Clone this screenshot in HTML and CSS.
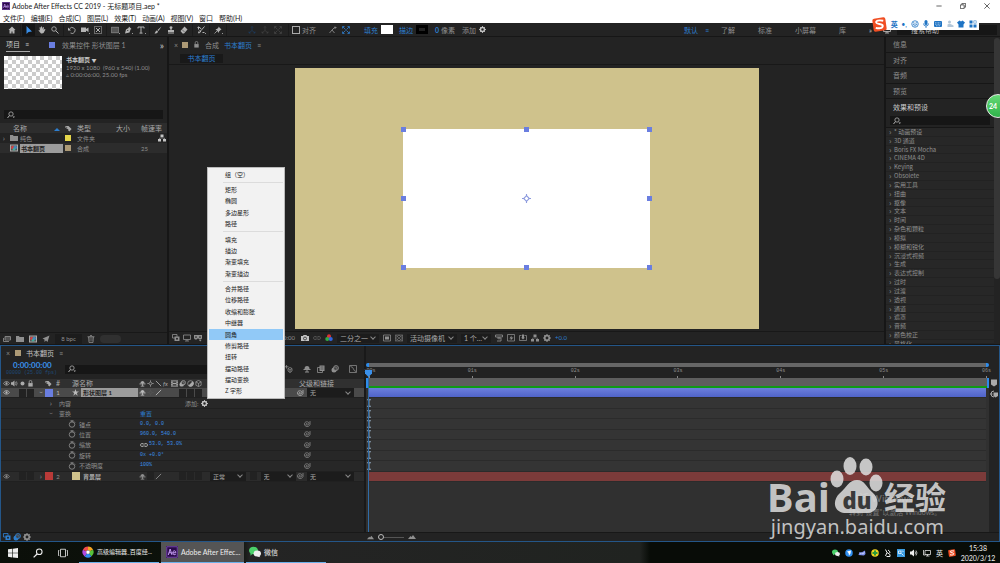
FILE: index.html
```
<!DOCTYPE html>
<html lang="zh-CN">
  <head>
    <meta charset="utf-8" />
    <title>Adobe After Effects CC 2019 - 无标题项目.aep *</title>
    <link rel="stylesheet" href="styles.css" />
  </head>
  <body>
    <!-- Icon set, 16 x 16 grid -->
    <svg class="sprite" aria-hidden="true">
      <symbol id="home" viewBox="0 0 16 16"><path fill="currentColor" d="M8 1 1 8h2v7h4v-4h2v4h4V8h2z" /></symbol>
      <symbol id="arrow" viewBox="0 0 16 16"><path fill="currentColor" d="M3 0v16l4-4 7-1z" /></symbol>
      <symbol id="hand" viewBox="0 0 16 16"><path fill="currentColor" d="M4 9 3 3l2-1 1 4V1h2l1 5 1-4 2 1-1 5 2-2 2 1-4 7-3 1H6L1 9l1-1z" /></symbol>
      <symbol id="zoom" viewBox="0 0 16 16"><circle cx="6" cy="6" r="4.5" fill="none" stroke="currentColor" stroke-width="1.7" /><path d="m9.500 9.500 5.500 5.500" stroke="currentColor" stroke-width="2" /></symbol>
      <symbol id="search" viewBox="0 0 16 16"><circle cx="8" cy="6" r="4.300" fill="none" stroke="currentColor" stroke-width="1.600" /><path d="m5 9-4 5" stroke="currentColor" stroke-width="2" /><path d="M11 11h5l-2.500 3z" fill="currentColor" /></symbol>
      <symbol id="rotate" viewBox="0 0 16 16"><path d="M3 6a6 6 0 1 1 2 8" fill="none" stroke="currentColor" stroke-width="1.700" /><path d="M0 3v6h6z" fill="currentColor" /></symbol>
      <symbol id="video" viewBox="0 0 16 16"><path fill="currentColor" d="M0 3h10v3l5-3v9l-5-3v3H0z" /></symbol>
      <symbol id="panbehind" viewBox="0 0 16 16"><path d="M1 1h14v14H1z" fill="none" stroke="currentColor" stroke-width="2" stroke-dasharray="2 2" /><path d="m4 4 8 8M12 4l-8 8" stroke="currentColor" stroke-width="2" /></symbol>
      <symbol id="rect" viewBox="0 0 16 16"><path fill="#555" stroke="currentColor" d="M.5 2.500h15v11H.5z" /></symbol>
      <symbol id="pen" viewBox="0 0 16 16"><path fill="currentColor" d="m10 1 5 5-2 1-2 6-9 2L4 7l5-3zM2 15l5-5" /><circle cx="7.500" cy="9" r="1.200" fill="#232323" /></symbol>
      <symbol id="type" viewBox="0 0 16 16"><path d="M2 5V2h12v3M8 2v12M5 14.200h6" fill="none" stroke="currentColor" stroke-width="2" /></symbol>
      <symbol id="brush" viewBox="0 0 16 16"><path fill="currentColor" d="m15 1-8 7 2 2zM6 9l2 2c-1 4-4 4-7 4 2-2 2-6 5-6z" /></symbol>
      <symbol id="stamp" viewBox="0 0 16 16"><path fill="currentColor" d="M5 2c1-2 5-2 6 0 0 3-2 3-2 6h5v4H2V8h5C7 5 5 5 5 2zM2 13h12v2H2z" /></symbol>
      <symbol id="eraser" viewBox="0 0 16 16"><path fill="currentColor" d="m9 1 6 6-7 8H5L1 10z" /><path d="m4 7 5 5" stroke="#232323" /></symbol>
      <symbol id="roto" viewBox="0 0 16 16"><path d="M15 1 8 9M8 9l-2 4-3 1 1-3 3-3M3 1v6M1 3h5l2 3M11 13h4" fill="none" stroke="currentColor" stroke-width="2" /></symbol>
      <symbol id="pin" viewBox="0 0 16 16"><path fill="currentColor" d="m9 1 6 6-2 1-3 3v3L3 6h3l3-3z" /><path d="m6 10-5 5" stroke="currentColor" stroke-width="1.500" /></symbol>
      <symbol id="axis" viewBox="0 0 16 16"><path d="M8 9V1M8 9l-6 5M8 9l6 5M6 3l2-2 2 2M2 11v3h3M14 11v3h-3" fill="none" stroke="currentColor" stroke-width="1.300" /></symbol>
      <symbol id="snap" viewBox="0 0 16 16"><path d="m1 14 5-6 5 6M6 8l5-5h4M12 1v5" fill="none" stroke="currentColor" stroke-width="1.700" /></symbol>
      <symbol id="expand" viewBox="0 0 16 16"><path d="M1 5V1h4M11 1h4v4M15 11v4h-4M5 15H1v-4M2 2l4 4M14 2l-4 4M2 14l4-4M14 14l-4-4M6 8h4" fill="none" stroke="currentColor" stroke-width="1.600" /></symbol>
      <symbol id="gear" viewBox="0 0 16 16"><circle cx="8" cy="8" r="4.600" fill="none" stroke="currentColor" stroke-width="3.400" /><path d="M8 0v3M8 13v3M0 8h3M13 8h3M2.500 2.500l2 2M11.500 11.500l2 2M13.500 2.500l-2 2M4.500 11.500l-2 2" stroke="currentColor" stroke-width="2" /></symbol>
      <symbol id="lock" viewBox="0 0 16 16"><path fill="currentColor" d="M3 7h10v8H3z" /><path d="M5 7V4a3 3 0 0 1 6 0v3" fill="none" stroke="currentColor" stroke-width="1.800" /></symbol>
      <symbol id="tag" viewBox="0 0 16 16"><path fill="currentColor" d="M1 2h7l7 7-5 6-3-3 1-2-7-4z" /><circle cx="4" cy="5" r="1.200" fill="#232323" /></symbol>
      <symbol id="folder" viewBox="0 0 16 16"><path fill="currentColor" d="M0 2h6l1 2h9v10H0z" /></symbol>
      <symbol id="folders" viewBox="0 0 16 16"><path fill="none" stroke="currentColor" stroke-width="1.700" d="M4 3h11v7H4zM1 6v7h11M4 6h11" /></symbol>
      <symbol id="comp" viewBox="0 0 16 16"><path fill="#aaa" d="M0 1h16v14H0z" /><path fill="#555" d="M2 3h12v10H2z" /><circle cx="5.500" cy="7" r="3.500" fill="#c44" /><circle cx="10.500" cy="7" r="3.500" fill="#48b" /><circle cx="8" cy="10.500" r="2.500" fill="#4a9" /></symbol>
      <symbol id="flow" viewBox="0 0 16 16"><path fill="currentColor" d="M5 1h6v5H5zM0 10h6v5H0zM10 10h6v5h-6z" /><path d="M8 5v3M3 10V8h10v2" fill="none" stroke="currentColor" /></symbol>
      <symbol id="plane" viewBox="0 0 16 16"><path fill="currentColor" d="M15 1 1 7l4 2v5l3-3 3 3z" /></symbol>
      <symbol id="trash" viewBox="0 0 16 16"><path d="M3 4h10l-1 11H4zM1 3.500h14M6 1h4M6 6v7M10 6v7" fill="none" stroke="currentColor" stroke-width="1.500" /></symbol>
      <symbol id="stack" viewBox="0 0 16 16"><path d="M1 1h9v7H1z" fill="none" stroke="currentColor" stroke-width="1.600" /><path fill="currentColor" d="M5 5h10v9H5z" /><circle cx="10" cy="9.500" r="2" fill="#232323" /></symbol>
      <symbol id="frameblend" viewBox="0 0 16 16"><path d="M1 5h10v10H1z" fill="none" stroke="currentColor" stroke-width="1.600" /><path fill="currentColor" d="M5 1h10v11H5z" /><path d="M7 4h6M7 8h6" stroke="#444" stroke-width="1.500" /></symbol>
      <symbol id="monitor" viewBox="0 0 16 16"><path d="M1 2h14v9H1zM8 11v3M4 14h8" fill="none" stroke="currentColor" stroke-width="1.600" /></symbol>
      <symbol id="mask" viewBox="0 0 16 16"><path fill="currentColor" d="M0 2h16v6c-1 4-6 4-8 0-2 4-7 4-8 0zM10 12h5l-2.500 3z" /><circle cx="4" cy="6" r="1.700" fill="#232323" /><circle cx="12" cy="6" r="1.700" fill="#232323" /></symbol>
      <symbol id="camera" viewBox="0 0 16 16"><path fill="currentColor" d="M0 4h4l1-2h6l1 2h4v10H0z" /><circle cx="8" cy="9" r="3" fill="none" stroke="#232323" stroke-width="1.500" /></symbol>
      <symbol id="rgb" viewBox="0 0 16 16"><circle cx="8" cy="4.500" r="4" fill="#d33" /><circle cx="4.500" cy="10" r="4" fill="#3a4" /><circle cx="11.500" cy="10" r="4" fill="#36d" /></symbol>
      <symbol id="region" viewBox="0 0 16 16"><path d="M1 2h14v12H1z" fill="none" stroke="currentColor" stroke-width="1.500" /><path fill="currentColor" d="M4 5h8v6H4z" /></symbol>
      <symbol id="grid" viewBox="0 0 16 16"><path d="M1 2h14v12H1zM1 2l14 12M15 2 1 14M8 2 1 8l7 6 7-6z" fill="none" stroke="currentColor" /></symbol>
      <symbol id="aspect" viewBox="0 0 16 16"><path d="M1 2h14v4H1zM4 8h8v6H4M8 6v5" fill="none" stroke="currentColor" stroke-width="1.700" /></symbol>
      <symbol id="fast" viewBox="0 0 16 16"><path d="M1 1h14v13H1z" fill="none" stroke="currentColor" stroke-width="1.500" /><path fill="currentColor" d="M9 3 5 9h3l-1 4 6-6H9z" /></symbol>
      <symbol id="graphframe" viewBox="0 0 16 16"><path d="M5 3H1v10h14V3h-4" fill="none" stroke="currentColor" stroke-width="1.500" /><path fill="currentColor" d="M6 1h4v6h2l-4 4-4-4h2z" /></symbol>
      <symbol id="eye" viewBox="0 0 16 16"><path d="M1 8c4-6 10-6 14 0-4 5-10 5-14 0z" fill="none" stroke="currentColor" stroke-width="1.800" /><circle cx="8" cy="8" r="2.600" fill="currentColor" /></symbol>
      <symbol id="speaker" viewBox="0 0 16 16"><path fill="currentColor" d="M0 5h3l5-4v14l-5-4H0z" /><path d="M10 5q2 3 0 6M12 3q4 5 0 10" fill="none" stroke="currentColor" stroke-width="1.500" /></symbol>
      <symbol id="dot" viewBox="0 0 16 16"><circle cx="8" cy="8" r="4.500" fill="currentColor" /></symbol>
      <symbol id="shy" viewBox="0 0 16 16"><path fill="currentColor" d="M3 8a5 6 0 0 1 10 0z" /><path d="M8 7v7M1 9h14M4 14h8" fill="none" stroke="currentColor" stroke-width="2" /></symbol>
      <symbol id="sun" viewBox="0 0 16 16"><circle cx="8" cy="8" r="3" fill="none" stroke="currentColor" stroke-width="1.500" /><path d="M8 1v3M8 12v3M1 8h3M12 8h3" stroke="currentColor" stroke-width="2" /></symbol>
      <symbol id="slash" viewBox="0 0 16 16"><path d="M2 14 14 2" stroke="currentColor" stroke-width="2" /></symbol>
      <symbol id="backslash" viewBox="0 0 16 16"><path d="m2 2 12 12" stroke="currentColor" stroke-width="2" /></symbol>
      <symbol id="film" viewBox="0 0 16 16"><path fill="currentColor" d="M0 1h16v14H0z" /><path fill="#444" d="M4 3h8v4H4zM4 9h8v4H4zM1 3h2v2H1zM1 7h2v2H1zM1 11h2v2H1zM13 3h2v2h-2zM13 7h2v2h-2zM13 11h2v2h-2z" /></symbol>
      <symbol id="blur" viewBox="0 0 16 16"><ellipse cx="6" cy="10" rx="5" ry="5" fill="currentColor" /><circle cx="10" cy="6" r="5" fill="#444" stroke="currentColor" stroke-width="1.500" /><circle cx="8" cy="8" r="4" fill="none" stroke="currentColor" /></symbol>
      <symbol id="half" viewBox="0 0 16 16"><circle cx="8" cy="8" r="6.500" fill="none" stroke="currentColor" stroke-width="1.500" /><path fill="currentColor" d="M13 3A7 7 0 0 1 3 13z" /></symbol>
      <symbol id="cube" viewBox="0 0 16 16"><path d="m8 1 6 3v8l-6 3-6-3V4zM2 4l6 4 6-4M8 8v7" fill="none" stroke="currentColor" stroke-width="1.500" /></symbol>
      <symbol id="star" viewBox="0 0 16 16"><path fill="currentColor" d="m8 0 2 5.500h6l-5 3.500 2 6.500-5-4-5 4 2-6.500L0 5.500h6z" /></symbol>
      <symbol id="watch" viewBox="0 0 16 16"><circle cx="8" cy="9" r="5.500" fill="none" stroke="currentColor" stroke-width="1.700" /><path d="M5 1.500h6M8 2v3M12 3l2 2" stroke="currentColor" stroke-width="1.700" /></symbol>
      <symbol id="spiral" viewBox="0 0 16 16"><path d="M9 8a1.500 1.500 0 1 0-1 2c3 0 4-2 4-4-2-4-9-3-9 2 0 6 9 7 11 1V2" fill="none" stroke="currentColor" stroke-width="1.500" /></symbol>
      <symbol id="chain" viewBox="0 0 16 16"><path d="M7 5H4a3 3 0 0 0 0 6h3M9 5h3a3 3 0 0 1 0 6H9M5 8h6" fill="none" stroke="currentColor" stroke-width="1.800" /></symbol>
      <symbol id="curve" viewBox="0 0 16 16"><path d="M1 1h14v14H1zM3 3q5 1 6 5t5 5" fill="none" stroke="currentColor" stroke-width="1.500" /></symbol>
      <symbol id="cubestar" viewBox="0 0 16 16"><path d="m10 5 4 2v5l-4 3-4-3V7zM6 7l4 3 4-3M10 10v5M3 0v7M0 3.500h7" fill="none" stroke="currentColor" stroke-width="1.500" /></symbol>
      <symbol id="key" viewBox="0 0 16 16"><path d="M4 1.500h8M4 14.500h8M8 1v14" stroke="currentColor" stroke-width="2" /></symbol>
      <symbol id="mountain" viewBox="0 0 16 16"><path fill="currentColor" d="m0 12 5-6 2 2 3-4 6 8z" /></symbol>
      <symbol id="marker" viewBox="0 0 16 16"><path fill="currentColor" d="M2 1h12v10l-6 4-6-4z" /></symbol>
      <symbol id="bin" viewBox="0 0 16 16"><path d="M8 2a6 6 0 1 0 0 12M0 8h5" fill="none" stroke="currentColor" stroke-width="2" /><path fill="currentColor" d="M7 5h9v7l-5 3-4-3z" /></symbol>
      <symbol id="sogou" viewBox="0 0 16 16"><rect x="1" y="1" width="14" height="14" rx="2" fill="#f04e23" transform="rotate(-8 8 8)" /><path d="M12 4C7 3 4 4 4.500 6s7 1 7 3.500S7 12.500 4 11.500" fill="none" stroke="#fff" stroke-width="2" /></symbol>
      <symbol id="smile" viewBox="0 0 16 16"><circle cx="8" cy="8" r="6.500" fill="none" stroke="currentColor" stroke-width="1.600" /><path d="M4.500 8c1 5 6 5 7 0zM5.500 4v2M10.500 4v2" fill="none" stroke="currentColor" stroke-width="1.500" /></symbol>
      <symbol id="mic" viewBox="0 0 16 16"><rect x="5" y="0" width="6" height="10" rx="3" fill="currentColor" /><path d="M3 7q0 5 5 5t5-5M8 12v4" fill="none" stroke="currentColor" stroke-width="1.600" /></symbol>
      <symbol id="keyboard" viewBox="0 0 16 16"><rect y="2" width="16" height="12" rx="2" fill="currentColor" /><path d="M2 5.500h12M2 8.500h12M4 11.500h8" stroke="#fff" stroke-dasharray="2 1" /></symbol>
      <symbol id="person" viewBox="0 0 16 16"><circle cx="7" cy="4" r="3" fill="currentColor" /><path d="M3 15V9q4-3 8 0l4 2v3H3z" fill="currentColor" /></symbol>
      <symbol id="shirt" viewBox="0 0 16 16"><path fill="currentColor" d="m5 1 3 2 3-2 5 4-3 4v6H3V9L0 5z" /></symbol>
      <symbol id="tiles" viewBox="0 0 16 16"><path fill="currentColor" d="M1 1h6v6H1zM1 9h6v6H1zM9 9h6v6H9z" /><path d="M9.500 1.500h5v5h-5z" fill="none" stroke="currentColor" /></symbol>
      <symbol id="ae" viewBox="0 0 16 16"><rect width="16" height="16" rx="1" fill="#2a0a4a" /><path d="M1 1h14v14H1z" fill="none" stroke="#8d5cc4" /><path d="m3 12 2.500-8L8 12M4 9h3M9 9h4c0-4-4-3-4 0s3 3 4 2" fill="none" stroke="#c9a0f5" stroke-width="1.300" /></symbol>
      <symbol id="windows" viewBox="0 0 16 16"><path fill="currentColor" d="m0 2 7-1v6.500H0zM8 1l8-1v7.500H8zM0 8.500h7V15l-7-1zM8 8.500h8V16l-8-1z" /></symbol>
      <symbol id="taskview" viewBox="0 0 16 16"><path d="M4 2h8v12H4zM2 4H.7v8H2M14 4h1.300v8H14" fill="none" stroke="currentColor" stroke-width="1.300" /></symbol>
      <symbol id="wheel" viewBox="0 0 16 16"><g fill="none" stroke-width="5"><path d="M8 3a5 5 0 0 1 4.500 3" stroke="#f5a623" /><path d="M12.500 6A5 5 0 0 1 11 12" stroke="#58c13a" /><path d="M11 12a5 5 0 0 1-6 0" stroke="#2f8cf0" /><path d="M5 12a5 5 0 0 1-1.500-6" stroke="#b04ae0" /><path d="M3.500 6A5 5 0 0 1 8 3" stroke="#f04b4b" /></g><circle cx="8" cy="8" r="2.500" fill="#fff" /></symbol>
      <symbol id="wechat" viewBox="0 0 16 16"><ellipse cx="6" cy="6" rx="6" ry="5" fill="#4bd06a" /><path fill="#4bd06a" d="M2 9v4l3-3z" /><ellipse cx="11" cy="10" rx="5" ry="4" fill="#eee" /><path fill="#eee" d="m13 12 2 3-4-1z" /></symbol>
      <symbol id="bluebird" viewBox="0 0 16 16"><circle cx="8" cy="8" r="7.500" fill="#2f8ff0" /><path fill="#fff" d="m4 5 8-2-1 6-3 4-1-5z" /></symbol>
      <symbol id="cloud" viewBox="0 0 16 16"><path fill="#7f92ee" d="M1 12 3 6l4 1 7-4 1 7-3 3z" /><path d="m4 10 3-2 3 2 3-4" stroke="#fff" fill="none" /></symbol>
      <symbol id="plus" viewBox="0 0 16 16"><circle cx="8" cy="8" r="7.500" fill="#f0d322" /><path d="M8 3v10M3 8h10" stroke="#2a9a3c" stroke-width="4" /></symbol>
      <symbol id="satellite" viewBox="0 0 16 16"><path d="m3 1 3 6-3 7M6 7l6 4v4H5M8 2q4 2 4 6" fill="none" stroke="currentColor" stroke-width="2" /></symbol>
      <symbol id="bluebox" viewBox="0 0 16 16"><path fill="#3a9be0" d="M0 0h16v16H0z" /><path d="M3 4h5v5H3zM9 9l4 4M10 3l3 3" stroke="#fff" stroke-width="1.500" fill="none" /></symbol>
      <symbol id="network" viewBox="0 0 16 16"><path d="M4 3h11v8H4zM9 11v3M6 14h7M1 2v10h4" fill="none" stroke="currentColor" stroke-width="1.500" /></symbol>
    </svg>

    <header class="titlebar">
      <svg class="icon icon-app"><use href="#ae" /></svg>
      <span class="title">Adobe After Effects CC 2019 - 无标题项目.aep *</span>
      <div class="window-buttons">
        <button aria-label="最小化"><svg viewBox="0 0 16 16"><path d="M1 8h14" /></svg></button>
        <button aria-label="还原"><svg viewBox="0 0 16 16"><path d="M1 5h10v10H1zM5 5V1h10v10h-4" /></svg></button>
        <button aria-label="关闭"><svg viewBox="0 0 16 16"><path d="m1 1 14 14M15 1 1 15" /></svg></button>
      </div>
    </header>

    <nav class="menubar">
      <button>文件(F)</button>
      <button>编辑(E)</button>
      <button>合成(C)</button>
      <button>图层(L)</button>
      <button>效果(T)</button>
      <button>动画(A)</button>
      <button>视图(V)</button>
      <button>窗口</button>
      <button>帮助(H)</button>
    </nav>

    <div class="toolbar">
      <div class="tools">
        <button aria-label="主页"><svg class="icon"><use href="#home" /></svg></button>
      </div>
      <div class="tools">
        <button class="on" aria-label="选取"><svg class="icon"><use href="#arrow" /></svg></button>
        <button aria-label="手形"><svg class="icon"><use href="#hand" /></svg></button>
        <button aria-label="缩放"><svg class="icon"><use href="#zoom" /></svg></button>
      </div>
      <div class="tools">
        <button aria-label="旋转"><svg class="icon"><use href="#rotate" /></svg></button>
        <button aria-label="摄像机" class="more"><svg class="icon"><use href="#video" /></svg></button>
        <button aria-label="锚点"><svg class="icon"><use href="#panbehind" /></svg></button>
      </div>
      <div class="tools">
        <button aria-label="矩形" class="more"><svg class="icon"><use href="#rect" /></svg></button>
        <button aria-label="钢笔" class="more"><svg class="icon"><use href="#pen" /></svg></button>
        <button aria-label="文字" class="more"><svg class="icon"><use href="#type" /></svg></button>
      </div>
      <div class="tools">
        <button aria-label="画笔"><svg class="icon"><use href="#brush" /></svg></button>
        <button aria-label="仿制图章"><svg class="icon"><use href="#stamp" /></svg></button>
        <button aria-label="橡皮擦"><svg class="icon"><use href="#eraser" /></svg></button>
      </div>
      <div class="tools">
        <button aria-label="Roto 笔刷" class="more"><svg class="icon"><use href="#roto" /></svg></button>
      </div>
      <div class="tools">
        <button aria-label="人偶" class="more"><svg class="icon"><use href="#pin" /></svg></button>
      </div>
      <div class="tools axes">
        <button class="blue" aria-label="本地轴"><svg class="icon"><use href="#axis" /></svg></button>
        <button aria-label="世界轴"><svg class="icon"><use href="#axis" /></svg></button>
        <button aria-label="视图轴"><svg class="icon"><use href="#expand" /></svg></button>
      </div>
      <div class="snapping">
        <label><input type="checkbox" />对齐</label>
        <svg class="icon"><use href="#snap" /></svg>
        <svg class="icon blue"><use href="#expand" /></svg>
      </div>
      <div class="shape-options">
        <button class="blue">填充</button>
        <button class="swatch white" aria-label="填充颜色"></button>
        <button class="blue stroke">描边</button>
        <button class="swatch black" aria-label="描边颜色"></button>
        <span class="px"><b class="blue">0</b>像素</span>
        <span>添加</span>
        <button aria-label="添加"><svg class="icon icon-s bright"><use href="#gear" /></svg></button>
      </div>
      <div class="workspaces">
        <button class="blue">默认<span class="burger">≡</span></button>
        <button>了解</button>
        <button>标准</button>
        <button>小屏幕</button>
        <button>库</button>
        <button class="bright">»</button>
      </div>
      <div class="help-search">
        <svg class="icon bright"><use href="#monitor" /></svg>
        <input type="search" placeholder="搜索帮助" aria-label="搜索帮助" />
      </div>
    </div>

    <main class="workspace">
      <section class="panel project">
        <div class="tabs">
          <button class="tab active">项目 <span>≡</span></button>
          <button class="tab second"><i class="chip violet"></i>效果控件 形状图层 1</button>
          <button class="bright overflow">»</button>
        </div>
        <div class="preview">
          <div class="thumb"></div>
          <div class="info">
            <strong>书本翻页 <small>▼</small></strong>
            <p>1920 x 1080 &nbsp;(960 x 540) (1.00)</p>
            <p>▵ 0:00:06:00, 25.00 fps</p>
          </div>
        </div>
        <label class="searchbox"><svg class="icon"><use href="#search" /></svg><input type="text" aria-label="搜索项目" /></label>
        <table class="items">
          <thead>
            <tr><th class="c-name">名称<i class="sort"></i></th><th class="c-tag"><svg class="icon icon-s"><use href="#tag" /></svg></th><th class="c-type">类型</th><th class="c-size">大小</th><th>帧速率</th></tr>
          </thead>
          <tbody>
            <tr><td><span class="file"><i class="twirl">›</i><svg class="icon"><use href="#folder" /></svg>纯色</span></td><td><i class="chip yellow"></i></td><td>文件夹</td><td></td><td class="end"><svg class="icon bright"><use href="#flow" /></svg></td></tr>
            <tr class="selected"><td><span class="file"><i class="twirl"></i><svg class="icon"><use href="#comp" /></svg><b>书本翻页</b></span></td><td><i class="chip tan"></i></td><td>合成</td><td></td><td>25</td></tr>
          </tbody>
        </table>
        <div class="panel-footer">
          <svg class="icon"><use href="#folders" /></svg>
          <svg class="icon"><use href="#folder" /></svg>
          <svg class="icon"><use href="#comp" /></svg>
          <svg class="icon"><use href="#plane" /></svg>
          <button class="bpc">8 bpc</button>
          <svg class="icon"><use href="#trash" /></svg>
          <span class="pill"></span>
        </div>
      </section>

      <section class="panel viewer">
        <div class="tabs">
          <span class="close">×</span><i class="chip tan"></i><svg class="icon icon-s"><use href="#lock" /></svg>
          <span>合成</span><span class="blue">书本翻页</span><span>≡</span>
        </div>
        <div class="crumbs"><button class="blue">书本翻页</button></div>
        <div class="stage">
          <div class="frame">
            <div class="shape">
              <i></i><i></i><i></i>
              <i></i>
              <svg class="anchor" viewBox="0 0 16 16"><path d="m8 3 5 5-5 5-5-5z" /><path d="M8 0v4M8 12v4M0 8h4M12 8h4" /></svg>
              <i></i>
              <i></i><i></i><i></i>
            </div>
          </div>
        </div>
        <div class="viewer-footer">
          <div class="left">
            <svg class="icon"><use href="#stack" /></svg>
            <svg class="icon"><use href="#monitor" /></svg>
            <svg class="icon"><use href="#mask" /></svg>
          </div>
          <button class="time">0:00:00:00</button>
          <svg class="icon bright"><use href="#camera" /></svg>
          <svg class="icon faint"><use href="#chain" /></svg>
          <svg class="icon"><use href="#rgb" /></svg>
          <span class="drop res"><select aria-label="分辨率"><option>二分之一</option></select></span>
          <svg class="icon"><use href="#region" /></svg>
          <svg class="icon"><use href="#grid" /></svg>
          <span class="drop cam"><select aria-label="3D 视图"><option>活动摄像机</option></select></span>
          <span class="drop views"><select aria-label="视图布局"><option>1 个…</option></select></span>
          <svg class="icon"><use href="#aspect" /></svg>
          <svg class="icon"><use href="#fast" /></svg>
          <svg class="icon"><use href="#graphframe" /></svg>
          <svg class="icon"><use href="#flow" /></svg>
          <svg class="icon"><use href="#gear" /></svg>
          <button class="blue exposure">+0.0</button>
        </div>
      </section>

      <aside class="panel effects">
        <div class="stackhead">
          <button>信息</button>
          <button>对齐</button>
          <button>音频</button>
          <button>预览</button>
          <button class="open">效果和预设<span>≡</span></button>
        </div>
        <label class="searchbox"><svg class="icon"><use href="#search" /></svg><input type="text" aria-label="搜索效果" /></label>
        <ul class="effect-list">
          <li>* 动画预设</li>
          <li>3D 通道</li>
          <li>Boris FX Mocha</li>
          <li>CINEMA 4D</li>
          <li>Keying</li>
          <li>Obsolete</li>
          <li>实用工具</li>
          <li>扭曲</li>
          <li>抠像</li>
          <li>文本</li>
          <li>时间</li>
          <li>杂色和颗粒</li>
          <li>模拟</li>
          <li>模糊和锐化</li>
          <li>沉浸式视频</li>
          <li>生成</li>
          <li>表达式控制</li>
          <li>过时</li>
          <li>过渡</li>
          <li>透视</li>
          <li>通道</li>
          <li>遮罩</li>
          <li>音频</li>
          <li>颜色校正</li>
          <li>风格化</li>
        </ul>
        <span class="scrollbar"></span>
      </aside>
    </main>

    <section class="timeline">
      <div class="layers">
        <div class="tabs"><span class="close">×</span><i class="chip tan"></i><span class="bright">书本翻页</span><span>≡</span></div>
        <div class="time-row">
          <div class="timecode"><b>0:00:00:00</b><span>00000 (25.00 fps)</span></div>
          <label class="searchbox"><svg class="icon"><use href="#search" /></svg><input type="text" aria-label="搜索图层" /></label>
          <div class="comp-switches">
            <svg class="icon"><use href="#cubestar" /></svg>
            <svg class="icon"><use href="#shy" /></svg>
            <svg class="icon"><use href="#frameblend" /></svg>
            <svg class="icon"><use href="#blur" /></svg>
            <svg class="icon"><use href="#curve" /></svg>
          </div>
        </div>
        <div class="layer head">
          <span class="av"><svg class="icon"><use href="#eye" /></svg><svg class="icon"><use href="#speaker" /></svg><svg class="icon"><use href="#dot" /></svg><svg class="icon"><use href="#lock" /></svg></span>
          <span></span>
          <svg class="icon icon-s"><use href="#tag" /></svg>
          <span class="num">#</span>
          <span class="source">源名称</span>
          <span></span>
          <span class="switches"><svg class="icon"><use href="#shy" /></svg><svg class="icon"><use href="#sun" /></svg><svg class="icon"><use href="#backslash" /></svg><em>fx</em><svg class="icon"><use href="#film" /></svg><svg class="icon"><use href="#blur" /></svg><svg class="icon"><use href="#half" /></svg><svg class="icon"><use href="#cube" /></svg></span>
          <span></span>
          <span class="parent-head">父级和链接</span>
        </div>
        <div class="rows">
          <div class="layer selected">
            <span class="av"><svg class="icon"><use href="#eye" /></svg><i class="none"></i><i></i><i></i></span>
            <button class="twirl open" aria-label="折叠">›</button>
            <i class="label violet"></i>
            <span class="num">1</span>
            <svg class="icon icon-s"><use href="#star" /></svg>
            <b class="name">形状图层 1</b>
            <span class="switches"><svg class="icon"><use href="#shy" /></svg><svg class="icon faint"><use href="#sun" /></svg><svg class="icon"><use href="#slash" /></svg><i class="none"></i><i class="none"></i><i></i><i></i><i></i></span>
            <span class="modes"></span>
            <span class="parent"><svg class="icon"><use href="#spiral" /></svg><span class="drop"><select aria-label="父级"><option>无</option></select></span></span>
          </div>
          <div class="group"><button class="twirl" aria-label="展开">›</button><span>内容</span><span></span><span class="add">添加: <svg class="icon icon-s bright"><use href="#gear" /></svg></span></div>
          <div class="group"><button class="twirl open" aria-label="折叠">›</button><span>变换</span><button class="blue">重置</button></div>
          <div class="prop"><svg class="icon"><use href="#watch" /></svg><span>锚点</span><span class="value">0.0, 0.0</span><svg class="icon"><use href="#spiral" /></svg></div>
          <div class="prop"><svg class="icon"><use href="#watch" /></svg><span>位置</span><span class="value">960.0, 540.0</span><svg class="icon"><use href="#spiral" /></svg></div>
          <div class="prop"><svg class="icon"><use href="#watch" /></svg><span>缩放</span><span class="value"><svg class="icon"><use href="#chain" /></svg> 53.0, 53.0%</span><svg class="icon"><use href="#spiral" /></svg></div>
          <div class="prop"><svg class="icon"><use href="#watch" /></svg><span>旋转</span><span class="value">0x +0.0°</span><svg class="icon"><use href="#spiral" /></svg></div>
          <div class="prop"><svg class="icon"><use href="#watch" /></svg><span>不透明度</span><span class="value">100%</span><svg class="icon"><use href="#spiral" /></svg></div>
          <div class="layer">
            <span class="av"><svg class="icon"><use href="#eye" /></svg><i class="none"></i><i></i><i></i></span>
            <button class="twirl" aria-label="展开">›</button>
            <i class="label red"></i>
            <span class="num">2</span>
            <i class="label sand"></i>
            <b class="name">背景层</b>
            <span class="switches"><svg class="icon"><use href="#shy" /></svg><i></i><svg class="icon"><use href="#slash" /></svg><i class="none"></i><i class="none"></i><i></i><i></i><i></i></span>
            <span class="modes"><span class="drop"><select aria-label="模式"><option>正常</option></select></span><i></i><span class="drop"><select aria-label="轨道遮罩"><option>无</option></select></span></span>
            <span class="parent"><svg class="icon"><use href="#spiral" /></svg><span class="drop"><select aria-label="父级"><option>无</option></select></span></span>
          </div>
        </div>
      </div>

      <div class="track">
        <div class="time-nav"></div>
        <div class="ruler">
          <span>:00s</span><span>01s</span><span>02s</span><span>03s</span><span>04s</span><span>05s</span><span>06s</span>
        </div>
        <div class="workarea"></div>
        <div class="lanes">
          <div class="bar violet"></div>
          <div><svg class="icon"><use href="#key" /></svg></div>
          <div><svg class="icon"><use href="#key" /></svg></div>
          <div><svg class="icon"><use href="#key" /></svg></div>
          <div><svg class="icon"><use href="#key" /></svg></div>
          <div><svg class="icon"><use href="#key" /></svg></div>
          <div><svg class="icon"><use href="#key" /></svg></div>
          <div><svg class="icon"><use href="#key" /></svg></div>
          <div class="bar red"></div>
        </div>
        <div class="playhead"></div>
      </div>
      <div class="side">
        <svg class="icon"><use href="#marker" /></svg>
        <svg class="icon"><use href="#bin" /></svg>
      </div>

      <div class="timeline-footer">
        <div class="toggles"><svg class="icon blue"><use href="#stack" /></svg><svg class="icon blue"><use href="#blur" /></svg><svg class="icon"><use href="#gear" /></svg></div>
        <svg class="icon icon-s"><use href="#mountain" /></svg>
        <input type="range" min="0" max="100" value="0" aria-label="缩放时间轴" />
        <svg class="icon"><use href="#mountain" /></svg>
      </div>
    </section>

    <footer class="taskbar">
      <button class="sys" aria-label="开始"><svg class="icon icon-l"><use href="#windows" /></svg></button>
      <button class="sys" aria-label="搜索"><svg class="icon icon-l flip"><use href="#zoom" /></svg></button>
      <button class="sys" aria-label="任务视图"><svg class="icon icon-l"><use href="#taskview" /></svg></button>
      <button class="app browser"><svg class="icon icon-xl"><use href="#wheel" /></svg>高级编辑器_百度经...</button>
      <button class="app current"><svg class="icon icon-xl"><use href="#ae" /></svg>Adobe After Effec...</button>
      <button class="app"><svg class="icon icon-xl"><use href="#wechat" /></svg>微信</button>
      <div class="tray">
        <svg class="icon"><use href="#wechat" /></svg>
        <svg class="icon"><use href="#bluebird" /></svg>
        <svg class="icon"><use href="#cloud" /></svg>
        <svg class="icon"><use href="#plus" /></svg>
        <svg class="icon"><use href="#satellite" /></svg>
        <svg class="icon"><use href="#bluebox" /></svg>
        <svg class="icon"><use href="#speaker" /></svg>
        <svg class="icon"><use href="#network" /></svg>
        <span>英</span>
        <svg class="icon"><use href="#sogou" /></svg>
      </div>
      <div class="clock"><span>15:38</span><span>2020/3/12</span></div>
    </footer>

    <!-- Add menu of the shape layer -->
    <div class="context-menu" role="menu">
      <button role="menuitem">组（空）</button>
      <hr />
      <button role="menuitem">矩形</button>
      <button role="menuitem">椭圆</button>
      <button role="menuitem">多边星形</button>
      <button role="menuitem">路径</button>
      <hr />
      <button role="menuitem">填充</button>
      <button role="menuitem">描边</button>
      <button role="menuitem">渐变填充</button>
      <button role="menuitem">渐变描边</button>
      <hr />
      <button role="menuitem">合并路径</button>
      <button role="menuitem">位移路径</button>
      <button role="menuitem">收缩和膨胀</button>
      <button role="menuitem">中继器</button>
      <button role="menuitem" class="hover">圆角</button>
      <button role="menuitem">修剪路径</button>
      <button role="menuitem">扭转</button>
      <button role="menuitem">摆动路径</button>
      <button role="menuitem">摆动变换</button>
      <button role="menuitem">Z 字形</button>
    </div>

    <div class="ime">
      <svg class="logo"><use href="#sogou" /></svg>
      <b>英</b>
      <span>•,</span>
      <svg class="icon"><use href="#smile" /></svg>
      <svg class="icon"><use href="#mic" /></svg>
      <svg class="icon"><use href="#keyboard" /></svg>
      <svg class="icon pale"><use href="#person" /></svg>
      <svg class="icon"><use href="#shirt" /></svg>
      <svg class="icon"><use href="#tiles" /></svg>
    </div>

    <div class="ball">24</div>

    <div class="activate">
      <p>激活 Windows</p>
      <small>转到"设置"以激活 Windows。</small>
    </div>

    <div class="watermark">
      <div class="brand">
        <span>Bai</span>
        <span class="paw">
          <svg viewBox="0 0 54 56"><g fill="currentColor"><ellipse cx="7" cy="22" rx="6.500" ry="8.500" /><ellipse cx="20" cy="9" rx="6.500" ry="9" /><ellipse cx="36" cy="10" rx="6.500" ry="8.500" /><ellipse cx="46" cy="26" rx="6.500" ry="8.500" /><path d="M27 23c8 0 9 7 15 12 9 7 7 21-5 21H16C3 56 2 43 10 36c7-6 9-13 17-13z" /></g></svg>
          <b>du</b>
        </span>
        <span class="cn">经验</span>
      </div>
      <div class="url">jingyan.baidu.com</div>
    </div>
  </body>
</html>
```
FILE: styles.css
```
* {
  box-sizing: border-box;
}

body {
  margin: 0;
  height: 100vh;
  display: flex;
  flex-direction: column;
  position: relative;
  overflow: hidden;
  background: #161616;
  color: #8f8f8f;
  font: 7px/10px Lato, "Noto Sans CJK SC", sans-serif;
}

button,
input,
select {
  margin: 0;
  padding: 0;
  border: 0;
  background: none;
  color: inherit;
  font: inherit;
  white-space: nowrap;
}

p,
ul {
  margin: 0;
  padding: 0;
  list-style: none;
}

i,
em {
  font-style: normal;
}

.sprite {
  display: none;
}

.icon {
  width: 8px;
  height: 8px;
  flex: none;
  display: block;
}

.icon-s {
  width: 7px;
  height: 7px;
}

.icon-l {
  width: 10px;
  height: 10px;
}

.icon-xl {
  width: 12px;
  height: 12px;
}

.blue {
  color: #2d7fd0;
}

.bright {
  color: #c4c4c4;
}

.faint {
  color: #555;
}

.chip {
  width: 6px;
  height: 6px;
  display: inline-block;
  flex: none;
}

.violet {
  background: #6a7ee0;
}

.tan {
  background: #ad9a76;
}

.yellow {
  background: #e5d64a;
}

.red {
  background: #b83a38;
}

.sand {
  background: #d0c28c;
}

/* Title and menus */
.titlebar {
  height: 12px;
  flex: none;
  display: flex;
  align-items: center;
  gap: 2px;
  padding-left: 2px;
  background: #fff;
  color: #222;
}

.window-buttons {
  margin-left: auto;
  display: flex;
  gap: 18px;
  padding-right: 10px;
}

.window-buttons button {
  width: 6px;
  display: flex;
}

.window-buttons svg {
  width: 6px;
  height: 6px;
  fill: none;
  stroke: #333;
  stroke-width: 2;
}

.menubar {
  height: 11px;
  flex: none;
  display: flex;
  align-items: center;
  gap: 6px;
  padding-left: 3px;
  background: #fff;
  color: #222;
}

/* Toolbar */
.toolbar {
  height: 14px;
  flex: none;
  display: flex;
  align-items: center;
  background: #232323;
  border-bottom: 1px solid #161616;
}

.tools {
  display: flex;
  padding: 0 2px 0 1px;
  color: #b4b4b4;
  border-right: 1px solid #1b1b1b;
}

.tools:first-child {
  padding-left: 5px;
}

.tools button {
  width: 13px;
  height: 12px;
  display: flex;
  align-items: center;
  justify-content: center;
}

.tools .on {
  background: #151515;
  color: #3a8ee6;
}

.tools .more {
  background: linear-gradient(#999, #999) right 1px bottom 2px / 1px 1px no-repeat;
}

.tools.axes {
  padding-left: 18px;
  padding-right: 4px;
  color: #444;
}

.axes .blue {
  color: #1d3f66;
}

.snapping {
  display: flex;
  align-items: center;
  gap: 5px;
  padding-left: 3px;
}

.snapping label {
  display: flex;
  align-items: center;
  gap: 2px;
  margin-right: 8px;
}

.snapping input {
  appearance: none;
  width: 8px;
  height: 8px;
  border: 1px solid #aaa;
}

.shape-options {
  display: flex;
  align-items: center;
  gap: 3px;
  margin-left: 14px;
}

.shape-options .stroke {
  margin-left: 3px;
}

.swatch {
  width: 12px;
  height: 9px;
}

.swatch.white {
  background: #fff;
}

.swatch.black {
  background: #222;
  border: 3px solid #000;
}

.px {
  margin: 0 4px;
}

.px b {
  margin-right: 2px;
}

.workspaces {
  display: flex;
  gap: 23px;
  margin-left: auto;
}

.workspaces .burger {
  margin: 0 -11px 0 7px;
}

.help-search {
  display: flex;
  align-items: center;
  gap: 6px;
  padding: 0 3px 0 11px;
}

.help-search input {
  width: 100px;
  height: 10px;
  padding-left: 14px;
  background: #161616;
}

.help-search input::placeholder {
  color: #bbb;
}

/* Panels */
.workspace {
  flex: 1;
  min-height: 0;
  display: grid;
  grid-template-columns: 167px 1fr 114px;
  gap: 2px;
  padding-bottom: 1px;
}

.panel {
  min-width: 0;
  min-height: 0;
  display: flex;
  flex-direction: column;
  background: #232323;
}

.tabs {
  height: 15px;
  flex: none;
  display: flex;
  align-items: center;
  gap: 5px;
}

.close {
  color: #888;
}

.project .tabs {
  padding-left: 6px;
}

.tab {
  display: flex;
  align-items: center;
  gap: 5px;
}

.tab.active {
  color: #ccc;
  border-bottom: 1px solid #aaa;
  height: 14px;
  width: 24px;
}

.tab.second {
  margin-left: 14px;
  gap: 7px;
}

.overflow {
  margin: 0 3px 0 auto;
  font-size: 10px;
}

.preview {
  display: flex;
  gap: 4px;
  padding: 4px 4px 2px;
}

.thumb {
  width: 58px;
  height: 33px;
  background: conic-gradient(#ccc 25%, #fff 0 50%, #ccc 0 75%, #fff 0) 0 0 / 8px 8px;
}

.info {
  font-size: 6px;
  line-height: 7px;
}

.info strong {
  color: #c8c8c8;
}

.searchbox {
  height: 9px;
  flex: none;
  display: flex;
  align-items: center;
  margin: 0 4px;
  padding-left: 3px;
  background: #161616;
  color: #b0b0b0;
}

.searchbox input {
  flex: 1;
  min-width: 0;
}

.project .searchbox {
  margin-top: 19px;
}

.items {
  margin-top: 4px;
  width: 100%;
  border-collapse: collapse;
  table-layout: fixed;
}

.items th,
.items td {
  height: 10px;
  padding: 0;
  font-weight: normal;
  font-size: 6px;
  line-height: 9px;
  text-align: left;
}

.items th {
  font-size: 7px;
  background: #2d2d2d;
  color: #aaa;
}

.c-name {
  width: 65px;
}

.items .c-name {
  padding-left: 13px;
}

.c-tag {
  width: 12px;
}

.c-type {
  width: 39px;
}

.c-size {
  width: 25px;
}

.sort {
  display: inline-block;
  margin-left: 27px;
  border: 3px solid transparent;
  border-top: 0;
  border-bottom-color: #2d7fd0;
}

.file {
  display: flex;
  align-items: center;
  gap: 2px;
}

.file .twirl {
  width: 8px;
  text-align: center;
}

.file b {
  width: 43px;
  padding-left: 1px;
  background: #9c9c9c;
  color: #222;
}

.items .selected {
  background: #2c2c2c;
}

.end .icon {
  margin-left: 17px;
}

.panel-footer {
  height: 12px;
  margin-top: auto;
  display: flex;
  align-items: center;
  gap: 5px;
  padding-left: 3px;
  border-top: 1px solid #181818;
}

.bpc {
  width: 27px;
  background: #1c1c1c;
  font-size: 6px;
}

.pill {
  width: 21px;
  height: 8px;
  border-radius: 4px;
  background: #303030;
}

/* Composition viewer */
.viewer .tabs {
  padding-left: 5px;
}

.viewer .tabs .chip {
  margin-left: -1px;
}

.crumbs {
  height: 13px;
  flex: none;
  padding: 2px 11px;
  border-bottom: 1px solid #181818;
}

.crumbs button {
  width: 43px;
  height: 9px;
  background: #191919;
  line-height: 9px;
  display: block;
}

.stage {
  flex: 1;
  min-height: 0;
  display: flex;
  align-items: flex-end;
  justify-content: center;
  padding-bottom: 2px;
}

.frame {
  height: 261px;
  aspect-ratio: 16 / 9;
  display: flex;
  align-items: center;
  justify-content: center;
  background: #cfc28c;
}

.shape {
  width: 54%;
  height: 55%;
  display: grid;
  grid-template-columns: repeat(3, auto);
  justify-content: space-between;
  align-content: space-between;
  align-items: center;
  background: linear-gradient(#fff, #fff) content-box;
  padding: 2px;
}

.shape i {
  width: 5px;
  height: 5px;
  margin: -2px;
  background: #6a7ee0;
}

.anchor {
  width: 9px;
  height: 9px;
  margin: -4px;
  fill: none;
  stroke: #8c9ade;
  stroke-width: 2;
}

.viewer-footer {
  height: 13px;
  flex: none;
  display: flex;
  align-items: center;
  gap: 4px;
  padding-left: 3px;
  border-top: 1px solid #181818;
}

.viewer-footer .left {
  width: 84px;
  display: flex;
  gap: 3px;
}

.viewer-footer .time {
  width: 35px;
  margin-right: 2px;
  text-align: right;
  font-size: 6px;
}

.drop {
  height: 9px;
  display: grid;
  align-items: center;
  background: #1c1c1c;
}

.drop select,
.drop::after {
  grid-area: 1 / 1;
}

.drop select {
  appearance: none;
  width: 100%;
  height: 9px;
  padding-left: 3px;
  line-height: 9px;
  color: #aaa;
}

.drop::after {
  content: "";
  width: 3px;
  height: 3px;
  margin: 0 4px 2px 0;
  justify-self: end;
  border: solid #888;
  border-width: 0 1px 1px 0;
  transform: rotate(45deg);
}

.res {
  width: 42px;
}

.cam {
  width: 50px;
}

.views {
  width: 30px;
}

.exposure {
  font-size: 6px;
}

/* Effects panel */
.effects {
  display: grid;
  grid-template-columns: 1fr 6px;
  grid-template-rows: 78px 12px 1fr;
}

.stackhead {
  display: grid;
  grid-auto-rows: 1fr;
}

.stackhead button {
  display: flex;
  align-items: center;
  justify-content: space-between;
  padding: 0 4px 0 7px;
  border-bottom: 1px solid #161616;
}

.stackhead .open {
  color: #ccc;
  border: 0;
}

.effects .searchbox {
  margin: 1px 4px 2px;
  height: 9px;
}

.effect-list {
  grid-column: 1;
  min-height: 0;
  overflow: hidden;
  display: grid;
  grid-template-rows: repeat(24, 1fr) 4px;
  background: #272727;
  border-top: 1px solid #161616;
  font: 6px/8px "Noto Sans CJK SC", sans-serif;
}

.effect-list li {
  min-height: 0;
  display: flex;
  padding-left: 3px;
  background: linear-gradient(#222, #222) bottom / 100% 1px no-repeat;
}

.effect-list li::before {
  content: "›";
  width: 5px;
  font-size: 8px;
}

.scrollbar {
  grid-area: 1 / 2 / 4;
  margin: 1px 0 65px;
  border-radius: 3px;
  background: #363636;
}

/* Timeline */
.timeline {
  height: 197px;
  flex: none;
  display: grid;
  grid-template-columns: 365px 1fr 10px;
  grid-template-rows: 1fr 9px;
  background: #232323;
  border: 1px solid #245688;
}

.layers {
  min-width: 0;
  border-right: 2px solid #191919;
}

.layers .tabs {
  height: 13px;
  padding-left: 5px;
}

.time-row {
  height: 20px;
  display: flex;
  align-items: center;
}

.timecode {
  width: 64px;
  display: flex;
  flex-direction: column;
  padding-left: 5px;
  font-size: 5px;
  line-height: 7px;
  color: #1f4a78;
}

.timecode b {
  padding-left: 7px;
  font-size: 8px;
  line-height: 9px;
  color: #3a90ea;
}

.timecode span {
  font-family: "Liberation Mono", monospace;
}

.time-row .searchbox {
  width: 205px;
  margin: 0 15px 0 0;
}

.comp-switches {
  display: flex;
  gap: 6px;
}

.comp-switches .icon:first-child {
  margin-right: 4px;
}

.comp-switches .icon:last-child {
  margin-left: 4px;
}

.layer {
  display: grid;
  grid-template-columns: 36px 8px 8px 19px 9px 57px 70px 88px 1fr;
  align-items: center;
  overflow: hidden;
  background: #2b2b2b;
  font-size: 6px;
  line-height: 9px;
}

.layer.head {
  height: 9px;
  font-size: 7px;
  color: #aaa;
  background: #303030;
}

.head .source {
  white-space: nowrap;
}

.head em {
  width: 7px;
  font-size: 6px;
  font-style: italic;
}

.parent-head {
  padding-left: 3px;
}

.av,
.switches {
  display: flex;
  align-items: center;
  gap: 1px;
}

.av {
  padding-left: 2px;
}

.av .icon,
.switches .icon {
  width: 7px;
  height: 7px;
}

.av i,
.switches i,
.modes i {
  width: 7px;
  height: 8px;
  background: #222;
}

.av .none,
.switches .none {
  background: none;
}

.switches {
  padding-left: 1px;
}

.num {
  text-align: center;
  padding-right: 9px;
}

.layer .name {
  color: #aaa;
  padding-left: 2px;
}

.label {
  width: 8px;
  height: 8px;
}

.rows {
  height: 94px;
  display: grid;
  grid-auto-rows: 1fr;
  font-size: 6px;
}

.rows > div {
  min-height: 0;
  border-bottom: 1px solid #202020;
}

.rows .selected {
  background: #4a4a4a;
  color: #bbb;
}

.rows .selected .name {
  background: #9c9c9c;
  color: #222;
}

.twirl {
  font-size: 8px;
}

.twirl.open {
  transform: rotate(90deg);
}

.modes {
  display: flex;
  align-items: center;
  gap: 4px;
  padding-left: 2px;
}

.modes .drop {
  flex: 1;
}

.parent {
  display: flex;
  align-items: center;
  gap: 3px;
}

.parent .drop {
  width: 47px;
}

.group,
.prop {
  display: grid;
  align-items: center;
  background: #272727;
  line-height: 9px;
}

.group {
  grid-template-columns: 12px 81px 45px 1fr;
  padding-left: 46px;
  justify-items: start;
}

.group .twirl {
  width: 8px;
}

.add {
  display: flex;
  align-items: center;
  gap: 2px;
}

.prop {
  grid-template-columns: 11px 61px 163px 1fr;
  padding-left: 67px;
}

.value {
  display: flex;
  align-items: center;
  gap: 1px;
  font: 5px/9px "Liberation Mono", monospace;
  color: #3a90ea;
}

.value .icon {
  color: #aaa;
}

/* Track area */
.track {
  position: relative;
  min-width: 0;
  padding-top: 17px;
  background: linear-gradient(#232323 42px, #303030 42px);
}

.time-nav {
  height: 4px;
  background: #666;
  border: solid #2d8ceb;
  border-width: 0 3px;
  border-radius: 2px;
}

.ruler {
  height: 11px;
  display: flex;
  justify-content: space-between;
  padding: 0 2px 0 3px;
  font: 5px/8px "Liberation Mono", monospace;
  background: #222;
}

.ruler span {
  width: 1px;
  display: flex;
  justify-content: center;
  background: linear-gradient(#888, #888) bottom / 1px 2px no-repeat;
}

.workarea {
  height: 10px;
  background: linear-gradient(#5e5e5e 8px, #0f9a16 8px);
  border: solid #2d8ceb;
  border-width: 0 2px;
}

.lanes {
  height: 94px;
  display: grid;
  grid-auto-rows: 1fr;
  margin: 0 3px;
  background: #343434;
}

.lanes > div {
  min-height: 0;
  display: flex;
  align-items: center;
  border-bottom: 1px solid #2b2b2b;
}

.lanes .icon {
  margin-left: -4px;
  color: #8aa0b4;
}

.lanes .bar.violet {
  background: linear-gradient(#6c7fdc, #4f63c8);
}

.lanes .bar.red {
  background: #7c3b3a;
}

.playhead {
  position: absolute;
  left: 2px;
  top: 24px;
  bottom: 0;
  width: 1px;
  background: #2f6ca8;
}

.playhead::before {
  content: "";
  display: block;
  width: 7px;
  height: 7px;
  margin-left: -3px;
  background: #3a90ea;
  clip-path: polygon(0 0, 100% 0, 100% 50%, 50% 100%, 0 50%);
}

.side {
  padding: 33px 1px 0;
  display: flex;
  flex-direction: column;
  gap: 3px;
  color: #aaa;
}

.timeline-footer {
  grid-column: 1 / -1;
  display: flex;
  align-items: center;
  gap: 4px;
  border-top: 1px solid #181818;
}

.toggles {
  width: 362px;
  display: flex;
  gap: 2px;
  padding-left: 2px;
}

.timeline-footer input {
  appearance: none;
  width: 26px;
  height: 6px;
  background: linear-gradient(#555, #555) center / 100% 1px no-repeat;
}

.timeline-footer input::-webkit-slider-thumb {
  appearance: none;
  width: 6px;
  height: 6px;
  border: 1px solid #bbb;
  border-radius: 50%;
  background: #232323;
}

/* Taskbar */
.taskbar {
  height: 21px;
  flex: none;
  display: flex;
  background: linear-gradient(90deg, #0b0f09, #0d120b 24%, #242424 25%, #202320 64%, #080c07 65%);
  color: #eee;
}

.sys {
  width: 25px;
  display: flex;
  align-items: center;
  justify-content: center;
}

.flip {
  transform: scaleX(-1);
}

.app {
  width: 80px;
  margin: 0 1px;
  display: flex;
  align-items: center;
  gap: 3px;
  padding-left: 3px;
  border-bottom: 1px solid #6ab0ea;
}

.app.current {
  width: 83px;
  padding-left: 5px;
  background: #555;
}

.app.browser {
  margin-left: 4px;
  font-size: 6px;
}

.tray {
  display: flex;
  align-items: center;
  justify-content: space-between;
  width: 124px;
  margin-left: auto;
}

.clock {
  width: 44px;
  display: flex;
  flex-direction: column;
  align-items: center;
  padding-top: 1px;
}

/* Floating items */
.context-menu {
  position: absolute;
  left: 207px;
  top: 167px;
  width: 78px;
  height: 232px;
  display: flex;
  flex-direction: column;
  padding: 1px;
  border: 1px solid #bbb;
  background: #f2f2f2;
  color: #222;
  font-size: 6px;
  font-family: "Noto Sans CJK SC", sans-serif;
}

.context-menu button {
  flex: 1;
  min-height: 0;
  padding-left: 16px;
  text-align: left;
}

.context-menu .hover {
  background: #91c9f7;
}

.context-menu hr {
  width: 60px;
  height: 4px;
  margin: 0 0 0 14px;
  border: 0;
  background: linear-gradient(#dcdcdc, #dcdcdc) center / 100% 1px no-repeat;
}

.ime {
  position: absolute;
  right: 21px;
  top: 18px;
  width: 107px;
  height: 12px;
  display: flex;
  align-items: center;
  justify-content: space-between;
  padding-right: 2px;
  background: linear-gradient(90deg, transparent 8px, #fff 8px);
  color: #1f74c4;
}

.ime .logo {
  width: 15px;
  height: 15px;
}

.ime .pale {
  color: #b4c8da;
}

.ball {
  position: absolute;
  right: -10px;
  top: 94px;
  width: 24px;
  height: 24px;
  padding-left: 2px;
  border: 1px solid #e8e8e8;
  border-radius: 50%;
  background: linear-gradient(#66d977, #2fb34a);
  color: #fff;
  font-weight: bold;
  line-height: 22px;
}

.activate {
  position: absolute;
  right: 47px;
  top: 492px;
  width: 104px;
  color: #777;
  font-size: 10px;
  line-height: 13px;
}

.activate small {
  font-size: 7px;
}

.watermark {
  position: absolute;
  right: 54px;
  top: 457px;
  color: rgba(222, 222, 222, 0.86);
  font-family: "Open Sans", "Noto Sans CJK SC", sans-serif;
}

.brand {
  display: flex;
  align-items: flex-end;
  justify-content: flex-end;
  font-weight: bold;
  font-size: 40px;
  line-height: 32px;
  height: 56px;
}

.paw {
  display: grid;
  width: 54px;
}

.paw svg,
.paw b {
  grid-area: 1 / 1;
}

.paw svg {
  width: 54px;
  height: 56px;
}

.paw b {
  align-self: end;
  text-align: center;
  font-size: 22px;
  line-height: 26px;
  color: #3a3a3a;
}

.cn {
  font-size: 31px;
}

.url {
  padding: 1px 0 0 4px;
  font-family: "Noto Sans", sans-serif;
  font-size: 20px;
  line-height: 26px;
}
```
